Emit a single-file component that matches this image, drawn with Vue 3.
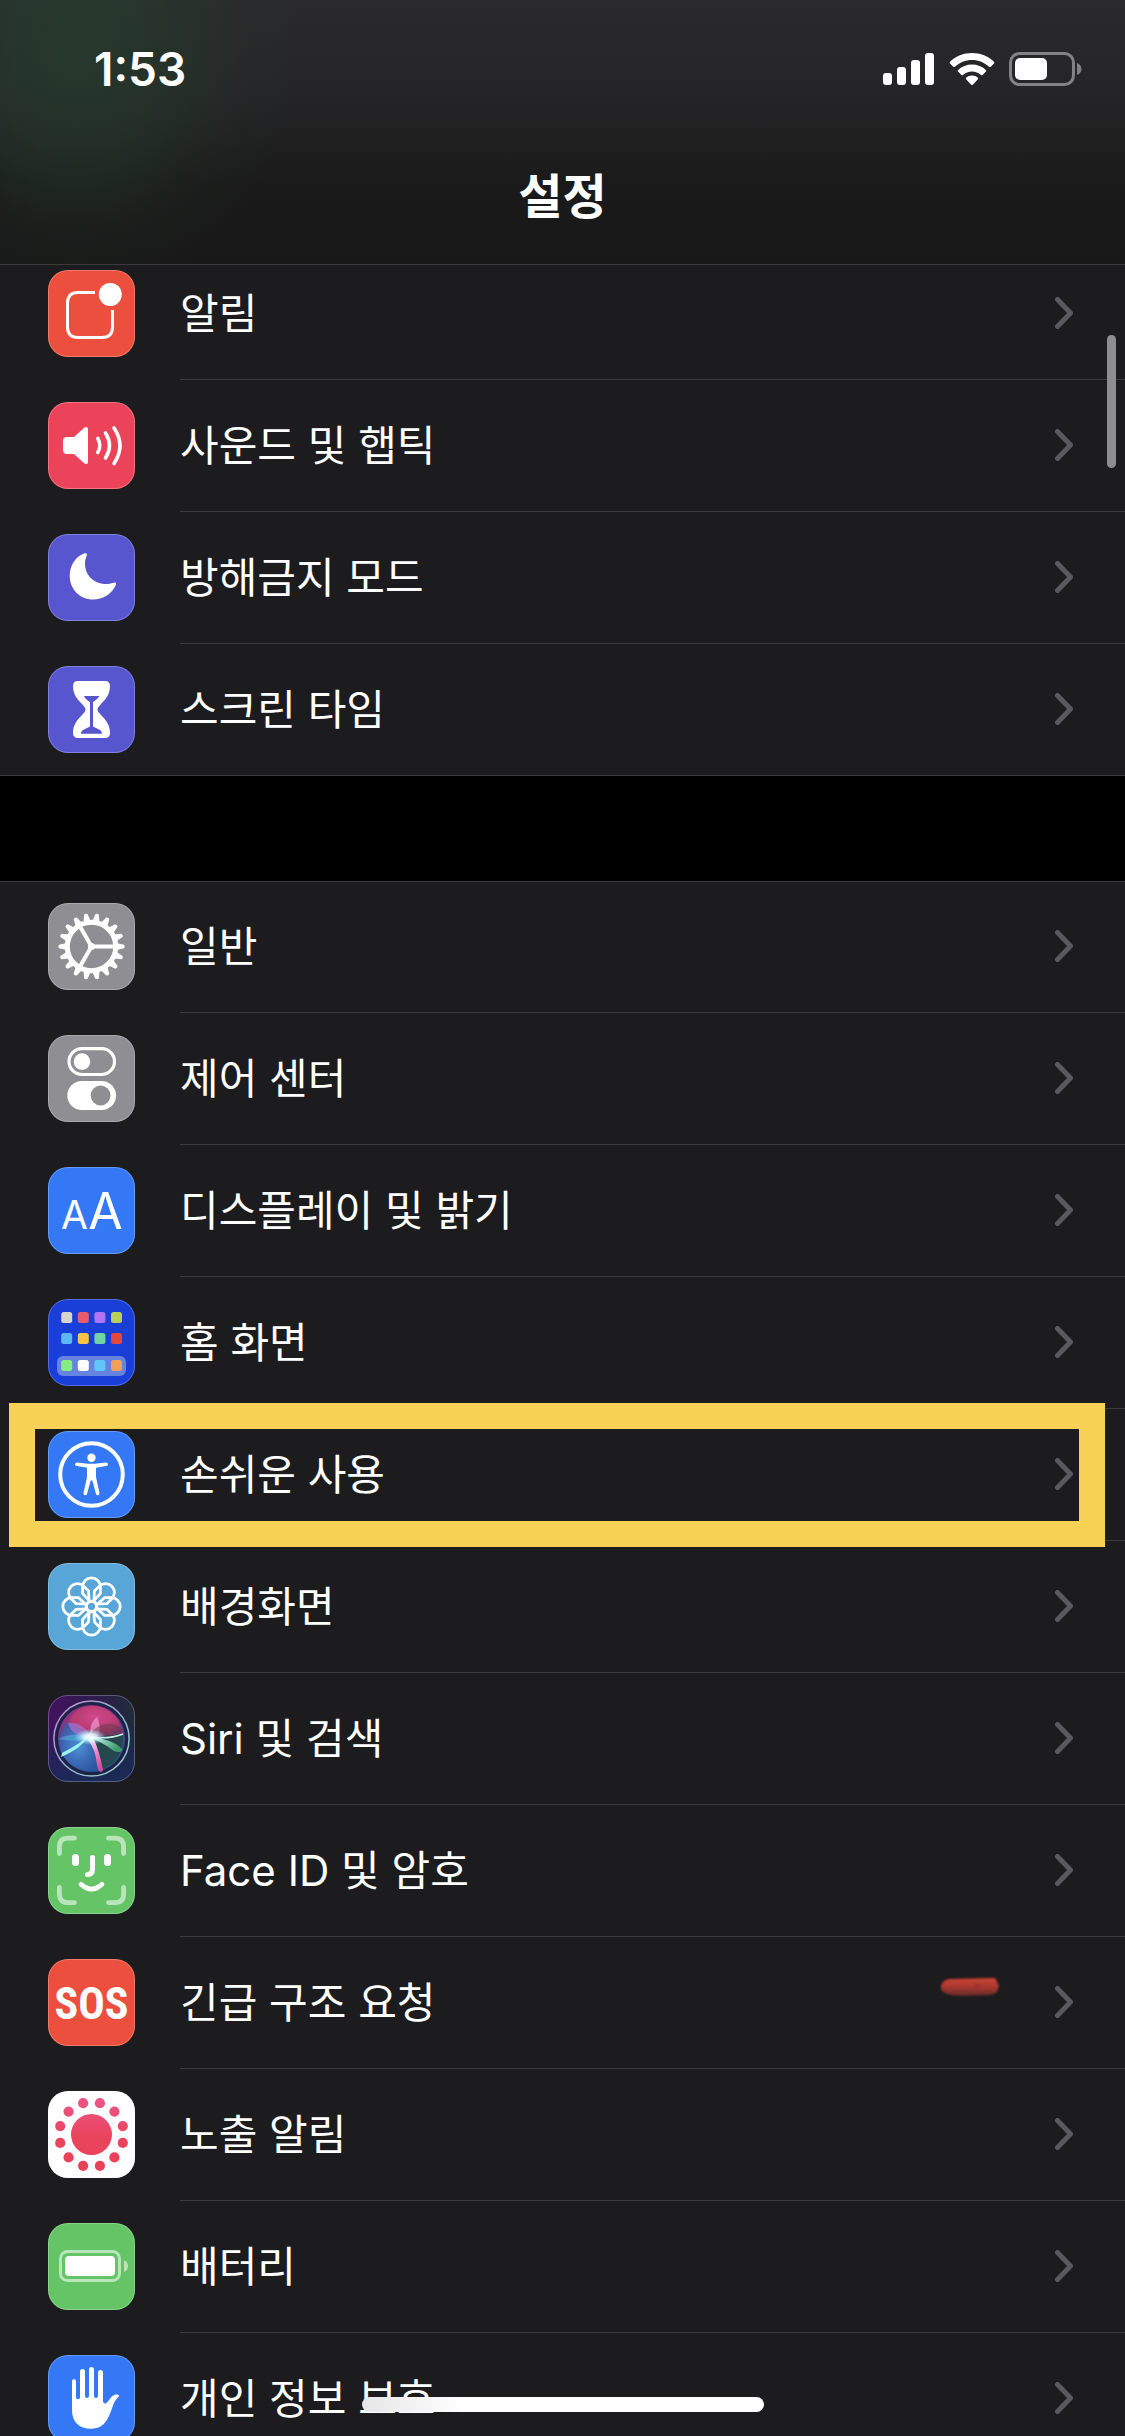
<template>
  <div class="screen">
    <header class="header">
      <div class="status-bar">
        <span class="clock">1:53</span>
        <div class="status-icons">
          <svg class="signal" viewBox="0 0 52 34" fill="#fff">
            <rect x="0" y="21" width="9" height="12" rx="3" />
            <rect x="14" y="15" width="9" height="18" rx="3" />
            <rect x="28" y="8" width="9" height="25" rx="3" />
            <rect x="42" y="1" width="9" height="32" rx="3" />
          </svg>
          <svg class="wifi" viewBox="0 0 46 34" fill="#fff">
            <path d="M23 1C31.500 1 39.200 4.300 45 9.700C45.500 10.200 45.500 10.900 45 11.400L41.700 14.700C41.200 15.200 40.500 15.200 40 14.700C35.500 10.600 29.500 8 23 8C16.500 8 10.500 10.600 6 14.700C5.500 15.200 4.800 15.200 4.300 14.700L1 11.400C.5 10.900 .5 10.200 1 9.700C6.800 4.300 14.500 1 23 1Z" />
            <path d="M23 12.500C28.300 12.500 33.200 14.500 36.900 17.900C37.400 18.400 37.400 19.100 36.900 19.600L33.600 22.900C33.100 23.400 32.500 23.400 32 22.900C29.600 20.800 26.500 19.500 23 19.500C19.500 19.500 16.400 20.800 14 22.900C13.500 23.400 12.900 23.400 12.400 22.900L9.100 19.600C8.600 19.100 8.600 18.400 9.100 17.900C12.800 14.500 17.700 12.500 23 12.500Z" />
            <path d="M23 23.500C25.200 23.500 27.300 24.300 28.900 25.700C29.400 26.200 29.400 26.800 28.900 27.300L23.800 32.700C23.300 33.200 22.700 33.200 22.200 32.700L17.100 27.300C16.600 26.800 16.600 26.200 17.100 25.700C18.700 24.300 20.800 23.500 23 23.500Z" />
          </svg>
          <svg class="battery" viewBox="0 0 74 34">
            <rect x="1.500" y="1.500" width="63" height="31" rx="9" fill="none" stroke="#828284" stroke-width="3" />
            <rect x="6" y="6" width="32" height="22" rx="5" fill="#fff" />
            <path d="M68 11C74 13 74 21 68 23Z" fill="#828284" />
          </svg>
        </div>
      </div>
      <h1 class="title">설정</h1>
    </header>

    <main class="content">
      <nav v-for="(group, g) in groups" :key="g" class="group">
        <a
          v-for="item in group"
          :key="item.icon"
          href="#"
          class="row"
          :class="{ marked: item.marked }"
          @click.prevent
        >
          <svg class="icon" :class="'icon-' + item.icon" viewBox="0 0 87 87">
            <g v-if="item.icon === 'notifications'">
              <path d="M47 22.500H30Q19.500 22.500 19.500 33V57Q19.500 67.500 30 67.500H54Q64.500 67.500 64.500 57V40" fill="none" stroke="#fff" stroke-width="3" />
              <circle cx="62.300" cy="24.500" r="11.500" fill="#fff" />
            </g>

            <g v-else-if="item.icon === 'sounds'" fill="none" stroke="#fff" stroke-width="3.600" stroke-linecap="round">
              <path d="M19 35H26L36.500 25.600Q40 23.500 40 27.500V59.500Q40 63.500 36.500 61.400L26 52H19Q15 52 15 48V39Q15 35 19 35Z" fill="#fff" stroke="none" />
              <path d="M49.800 36.500Q53.800 43.500 49.800 50.500" />
              <path d="M57.500 31Q65.500 43.500 57.500 56" />
              <path d="M66 26Q78 43.500 66 61.500" />
            </g>

            <path
              v-else-if="item.icon === 'moon'"
              d="M36 19.500C27 23 21.700 32 21.700 42C21.700 55 32 65.600 45 65.600C55 65.600 64 60 67.800 51C68.600 49 67.500 48 65.500 48.800C62 50 59 50.300 56 50C45 49 37 41 37 29.500C37 27 37.500 24.500 38.700 22C39.500 20 38.500 18.700 36 19.500Z"
              fill="#fff"
            />

            <g v-else-if="item.icon === 'hourglass'">
              <path d="M30 15H57Q62 15 62 20C62 28 58 33 53 38Q49.500 41.500 49.500 43.500Q49.500 45.500 53 49C58 54 62 59 62 67Q62 72 57 72H30Q25 72 25 67C25 59 29 54 34 49Q37.500 45.500 37.500 43.500Q37.500 41.500 34 38C29 33 25 28 25 20Q25 15 30 15Z" fill="#fff" />
              <path d="M36 30H51.500Q50 33 45 36V60.500L52 64Q54 65 54 67.700H33Q33 65 35 64L42 60.500V36Q37 33 36 30Z" fill="#5856ce" />
            </g>

            <g v-else-if="item.icon === 'general'" transform="translate(43.500 43.500)">
              <path
                v-for="n in 18"
                :key="n"
                :transform="'rotate(' + n * 20 + ')'"
                d="M25 -3.600L32.500 -1.800Q34 0 32.500 1.800L25 3.600Z"
                fill="#fff"
              />
              <circle r="24.200" fill="none" stroke="#fff" stroke-width="5" />
              <g fill="none" stroke="#fff" stroke-width="4">
                <path d="M0 0H23" />
                <path d="M0 0L-11.500 -20" />
                <path d="M0 0L-11.500 20" />
              </g>
              <circle r="3.600" fill="#fff" />
            </g>

            <g v-else-if="item.icon === 'control'">
              <rect x="21" y="13.700" width="45.500" height="25.800" rx="12.900" fill="none" stroke="#fff" stroke-width="3.200" />
              <circle cx="34" cy="26.600" r="8.300" fill="#fff" />
              <rect x="19.300" y="46" width="48.800" height="29" rx="14.500" fill="#fff" />
              <circle cx="52.600" cy="60.500" r="9.900" fill="#8e8e93" />
            </g>

            <g v-else-if="item.icon === 'display'" class="letters">
              <text x="26.500" y="62" font-size="39">A</text>
              <text x="57.500" y="62" font-size="50">A</text>
            </g>

            <g v-else-if="item.icon === 'home'">
              <rect x="9" y="57" width="69" height="20" rx="6" fill="#6683e0" />
              <rect
                v-for="(color, n) in homeTiles"
                :key="n"
                :x="13.200 + (n % 4) * 16.600"
                :y="[13, 34, 61][Math.floor(n / 4)]"
                width="11"
                height="11"
                rx="2.500"
                :fill="color"
              />
            </g>

            <g v-else-if="item.icon === 'accessibility'">
              <circle cx="43.500" cy="43.500" r="31.300" fill="none" stroke="#fff" stroke-width="4" />
              <circle cx="43.500" cy="26.700" r="4.200" fill="#fff" />
              <path d="M29 31.500L40 32.800H47L58 31.500Q60 31.500 60 33.200Q60 34.800 58 35L48 36.700V46L51.500 62Q51.500 64 50 64.300Q48.500 64.500 48 63L44.300 49.500H42.700L39 63Q38.500 64.500 37 64.300Q35.200 64 35.500 62L39 46V36.700L29 35Q27 34.800 27 33.200Q27 31.500 29 31.500Z" fill="#fff" />
            </g>

            <g v-else-if="item.icon === 'wallpaper'" transform="translate(43.500 43.500)" fill="none" stroke="#fff" stroke-width="2.800">
              <path
                v-for="n in 8"
                :key="n"
                :transform="'rotate(' + n * 45 + ')'"
                d="M-1.500 -5L-8.900 -13V-19.800A8.900 8.900 0 0 1 8.900 -19.800V-13L1.500 -5Z"
              />
              <circle r="5.400" />
            </g>

            <g v-else-if="item.icon === 'siri'">
              <defs>
                <linearGradient id="siri-bg" x1="0" y1="0" x2="1" y2="0">
                  <stop offset="0" stop-color="#43125f" />
                  <stop offset=".55" stop-color="#2d1c4c" />
                  <stop offset="1" stop-color="#202c3c" />
                </linearGradient>
                <linearGradient id="siri-shade" x1="0" y1="0" x2="0" y2="1">
                  <stop offset=".3" stop-color="#1a2460" stop-opacity="0" />
                  <stop offset="1" stop-color="#1a2a56" />
                </linearGradient>
                <linearGradient id="siri-ring" x1="0" y1="0" x2="1" y2="1">
                  <stop offset="0" stop-color="#c58ad0" />
                  <stop offset=".5" stop-color="#8fb0c8" />
                  <stop offset="1" stop-color="#9ad8c4" />
                </linearGradient>
                <linearGradient id="siri-disc" x1=".3" y1="0" x2=".6" y2="1">
                  <stop offset="0" stop-color="#a03080" />
                  <stop offset=".4" stop-color="#6a3a88" />
                  <stop offset="1" stop-color="#245890" />
                </linearGradient>
                <radialGradient id="siri-pink" cx=".5" cy=".35" r=".65">
                  <stop offset="0" stop-color="#d2488e" />
                  <stop offset=".7" stop-color="#b43a6c" />
                  <stop offset="1" stop-color="#7c2c6c" stop-opacity=".6" />
                </radialGradient>
                <radialGradient id="siri-blue" cx=".45" cy=".5" r=".6">
                  <stop offset="0" stop-color="#4a94d8" />
                  <stop offset="1" stop-color="#2c55a8" stop-opacity=".7" />
                </radialGradient>
                <radialGradient id="siri-glow">
                  <stop offset="0" stop-color="#fff" />
                  <stop offset=".4" stop-color="#e4fcff" stop-opacity=".85" />
                  <stop offset="1" stop-color="#9be8ff" stop-opacity="0" />
                </radialGradient>
                <linearGradient id="siri-green" x1="0" y1="0" x2="1" y2=".4">
                  <stop offset="0" stop-color="#c8fff0" />
                  <stop offset="1" stop-color="#3c9a6c" />
                </linearGradient>
                <linearGradient id="siri-petal" x1="0" y1="0" x2=".3" y2="1">
                  <stop offset="0" stop-color="#fff" />
                  <stop offset=".5" stop-color="#ee90d0" />
                  <stop offset="1" stop-color="#d84c9c" />
                </linearGradient>
              </defs>
              <rect width="87" height="87" fill="url(#siri-bg)" />
              <rect width="87" height="87" fill="url(#siri-shade)" />
              <circle cx="43.500" cy="43.500" r="37" fill="#1c2348" />
              <circle cx="43.500" cy="43.500" r="33.500" fill="url(#siri-disc)" />
              <path d="M43 42L20 27C26 15 36 10 46 11C61 12 73 23 75 39C66 43 54 43 43 42Z" fill="url(#siri-pink)" />
              <path d="M43 42L75 39C77 54 68 70 54 74L45 58Z" fill="#24484e" />
              <path d="M43 42L20 27C10 36 9 52 16 62C25 75 40 79 53 74Z" fill="url(#siri-blue)" />
              <path d="M43 42C38 32 30 27 20 28C22 37 31 43 43 42Z" fill="#a770c8" opacity=".75" />
              <path d="M43 42C41 32 44 26 49 22C53 30 52 38 48 44Z" fill="#ee93cc" opacity=".75" />
              <path d="M42 38C54 26 68 26 75 36C75 40 60 41 42 42Z" fill="#6c3c50" opacity=".55" />
              <path d="M42 42C55 43 68 47 74 54C75 57 70 58 66 56C58 50 50 46 42 42Z" fill="url(#siri-green)" />
              <path d="M45 42C50 53 53 64 55 75C53 79 50 76 49 70C48 60 45 51 40 45Z" fill="url(#siri-petal)" />
              <path d="M45 34C40 46 28 56 13 62L14 58C27 51 37 46 45 34Z" fill="#9cf4f2" />
              <path d="M10 44C24 38 33 39 44 42C34 47 22 46 10 44Z" fill="#54c4ec" opacity=".45" />
              <path d="M44 42C56 44 67 42 75 39" fill="none" stroke="#cfeeee" stroke-width="1.500" />
              <ellipse cx="42" cy="42" rx="16" ry="8" fill="url(#siri-glow)" />
              <circle cx="43.500" cy="43.500" r="37.600" fill="none" stroke="url(#siri-ring)" stroke-width="1.500" />
            </g>

            <g v-else-if="item.icon === 'faceid'" fill="none" stroke="#fff" stroke-linecap="round">
              <g stroke="#b9e5ba" stroke-width="4.800">
                <path d="M11.400 26.500V20Q11.400 11.200 20 11.200H26.500" />
                <path d="M60.500 11.200H67Q75.600 11.200 75.600 20V26.500" />
                <path d="M75.600 60.500V67Q75.600 75.600 67 75.600H60.500" />
                <path d="M26.500 75.600H20Q11.400 75.600 11.400 67V60.500" />
              </g>
              <path d="M27.500 30.500V35.500M59.500 30.500V35.500" stroke-width="7" />
              <path d="M44.500 30.500V42Q44.500 47.500 39.500 47.500" stroke-width="5" />
              <path d="M33 57.300Q43.500 67 54 57.300" stroke-width="4.600" />
            </g>

            <text v-else-if="item.icon === 'sos'" class="sos" x="43.500" y="60" text-anchor="middle" font-size="44">SOS</text>

            <g v-else-if="item.icon === 'exposure'">
              <defs>
                <linearGradient id="exposure-fill" gradientUnits="userSpaceOnUse" x1="0" y1="-36" x2="0" y2="36">
                  <stop offset="0" stop-color="#ec5488" />
                  <stop offset=".55" stop-color="#ea445c" />
                  <stop offset="1" stop-color="#ea4058" />
                </linearGradient>
              </defs>
              <g transform="translate(43.500 43.500)" fill="url(#exposure-fill)">
                <circle r="20.500" />
                <circle v-for="(dot, n) in exposureDots" :key="n" :cx="dot.x" :cy="dot.y" r="5.100" />
              </g>
            </g>

            <g v-else-if="item.icon === 'battery'">
              <rect x="12.500" y="28.500" width="59" height="29" rx="7" fill="none" stroke="#b9e5ba" stroke-width="3" />
              <rect x="17" y="33" width="50" height="20" rx="4" fill="#fff" />
              <path d="M76 37Q80 39 80 43Q80 47 76 49Z" fill="#b9e5ba" />
            </g>

            <path
              v-else-if="item.icon === 'privacy'"
              d="M24 26.500Q24 24 26 24Q28 24 28 26.500V42.500Q28 44.300 30 44.300Q32 44.300 32 42.500V16.500Q32 14 34.500 14Q37 14 37 16.500V41Q37 43 39 43Q41 43 41 41V14.500Q41 12 43.500 12Q46 12 46 14.500V41Q46 43 48 43Q50 43 50 41V17.500Q50 15 52.500 15Q55 15 55 17.500V45Q55 49 57.500 48.500C60 48 61.500 42.500 66 40C68.500 39 72 39.500 70.800 41.500C64.500 47 64.500 55 60 63C56.500 70 51 73.700 43 73.700C31 73.700 24 67 24 55Z"
              fill="#fff"
            />
          </svg>
          <span class="body">
            <span class="label">{{ item.label }}</span>
            <svg class="chevron" viewBox="0 0 18 32">
              <path d="M2.500 2.500L15.500 16L2.500 29.500" fill="none" stroke="#5a5a5e" stroke-width="5" stroke-linecap="round" stroke-linejoin="round" />
            </svg>
          </span>
          <svg v-if="item.icon === 'sos'" class="smudge" viewBox="0 0 60 20">
            <defs>
              <linearGradient id="smudge-fill" x1="0" y1="0" x2="0" y2="1">
                <stop offset="0" stop-color="#cf4437" />
                <stop offset=".5" stop-color="#a8382f" />
                <stop offset="1" stop-color="#642b28" />
              </linearGradient>
            </defs>
            <path d="M1 9Q2 3 10 2L30 1.500L54 1Q57 2 57 5L59 9L57 15Q54 18 50 18L22 19Q10 19 5 16Q0 14 1 9Z" fill="url(#smudge-fill)" />
            <path d="M33 8L42 7L38 10Z" fill="#8a302a" />
          </svg>
        </a>
      </nav>
    </main>

    <div class="scrollbar"></div>
    <div class="home-indicator"></div>
  </div>
</template>

<script setup>
const groups = [
  [
    { icon: 'notifications', label: '알림' },
    { icon: 'sounds', label: '사운드 및 햅틱' },
    { icon: 'moon', label: '방해금지 모드' },
    { icon: 'hourglass', label: '스크린 타임' },
  ],
  [
    { icon: 'general', label: '일반' },
    { icon: 'control', label: '제어 센터' },
    { icon: 'display', label: '디스플레이 및 밝기' },
    { icon: 'home', label: '홈 화면' },
    { icon: 'accessibility', label: '손쉬운 사용', marked: true },
    { icon: 'wallpaper', label: '배경화면' },
    { icon: 'siri', label: 'Siri 및 검색' },
    { icon: 'faceid', label: 'Face ID 및 암호' },
    { icon: 'sos', label: '긴급 구조 요청' },
    { icon: 'exposure', label: '노출 알림' },
    { icon: 'battery', label: '배터리' },
    { icon: 'privacy', label: '개인 정보 보호' },
  ],
];

const homeTiles = [
  '#d6d6cc', '#ea5c6c', '#b074f4', '#b8d058',
  '#5cb8f4', '#f6c444', '#70d4a4', '#e4483a',
  '#86ee80', '#ffffff', '#60c8f8', '#f0a058',
];

const exposureDots = Array.from({ length: 12 }, (_, n) => {
  const angle = ((n * 30 + 15) * Math.PI) / 180;
  return { x: 32.4 * Math.cos(angle), y: 32.4 * Math.sin(angle) };
});
</script>

<style>
body {
  margin: 0;
  background: #000;
}
</style>

<style scoped>
.screen {
  position: relative;
  height: 100vh;
  overflow: hidden;
  display: flex;
  flex-direction: column;
  background: #000;
  color: #fff;
  font-family: Inter, "Noto Sans CJK KR", sans-serif;
}

/* Header */
.header {
  position: relative;
  z-index: 1;
  flex-shrink: 0;
  box-sizing: border-box;
  height: 265px;
  border-bottom: 1px solid #3b3b3d;
  background:
    radial-gradient(ellipse 220px 260px at 75px 40px, rgba(38, 60, 44, 0.85), rgba(38, 60, 44, 0.55) 40%, rgba(38, 60, 44, 0.15) 75%, rgba(38, 60, 44, 0)),
    linear-gradient(#2a2a2c, #252527 35%, #1a1a1a 70%, #181818);
}

.status-bar {
  display: flex;
  justify-content: space-between;
  align-items: center;
  height: 138px;
  padding: 0 42px 0 94px;
}

.clock {
  font-size: 46px;
  font-weight: 600;
}

.status-icons {
  display: flex;
  align-items: center;
  gap: 14px;
}

.signal {
  width: 52px;
  height: 34px;
}

.wifi {
  width: 46px;
  height: 34px;
}

.battery {
  width: 74px;
  height: 34px;
}

.title {
  margin: 0;
  font-size: 48px;
  line-height: 118px;
  font-weight: 600;
  text-align: center;
}

/* List, scrolled slightly under the header */
.content {
  flex-shrink: 0;
  display: flex;
  flex-direction: column;
  gap: 105px;
  margin-top: -17px;
}

.group {
  background: #1c1c1e;
  box-shadow: inset 0 1px #3b3b3d, inset 0 -1px #3b3b3d;
}

.row {
  position: relative;
  display: flex;
  align-items: center;
  gap: 45px;
  height: 132px;
  padding-left: 48px;
  color: inherit;
  text-decoration: none;
}

.body {
  flex: 1;
  align-self: stretch;
  display: flex;
  justify-content: space-between;
  align-items: center;
  padding-right: 52px;
  border-bottom: 1px solid #3b3b3d;
}

.label {
  font-size: 42px;
  line-height: 60px;
}

.chevron {
  width: 18px;
  height: 32px;
  margin-bottom: 1px;
}

.marked::after {
  content: "";
  position: absolute;
  z-index: 1;
  inset: -6px 20px -6px 9px;
  border: 26px solid #f8d254;
}

.smudge {
  position: absolute;
  top: 40px;
  right: 125px;
  width: 60px;
  height: 20px;
  filter: blur(1px);
}

/* Icons */
.icon {
  flex-shrink: 0;
  width: 87px;
  height: 87px;
  margin-bottom: 1px;
  border-radius: 20px;
  outline: 1px solid rgba(255, 255, 255, 0.25);
  outline-offset: -1px;
}

.icon-notifications,
.icon-sos {
  background: #ec4f3d;
}

.icon-sounds {
  background: #eb445a;
}

.icon-moon,
.icon-hourglass {
  background: #5856ce;
}

.icon-general,
.icon-control {
  background: #8e8e93;
}

.icon-display,
.icon-accessibility,
.icon-privacy {
  background: #3478f6;
}

.icon-home {
  background: #1a3ed8;
}

.icon-wallpaper {
  background: #58a6d7;
}

.icon-faceid,
.icon-battery {
  background: #65c466;
}

.icon-exposure {
  background: #fff;
}

.letters {
  fill: #fff;
  font-family: Inter, sans-serif;
  font-weight: 400;
  text-anchor: middle;
}

.sos {
  fill: #fff;
  font-family: "Roboto Condensed", "Liberation Sans Narrow", "Liberation Sans", sans-serif;
  font-weight: 700;
}

/* Overlays */
.scrollbar {
  position: absolute;
  z-index: 2;
  top: 335px;
  right: 9px;
  width: 9px;
  height: 133px;
  border-radius: 5px;
  background: #8e8e90;
}

.home-indicator {
  position: absolute;
  z-index: 2;
  bottom: 24px;
  left: 50%;
  width: 402px;
  height: 15px;
  border-radius: 8px;
  background: linear-gradient(90deg, #e6e6e6, #fff 25%);
  transform: translateX(-50%);
}
</style>
